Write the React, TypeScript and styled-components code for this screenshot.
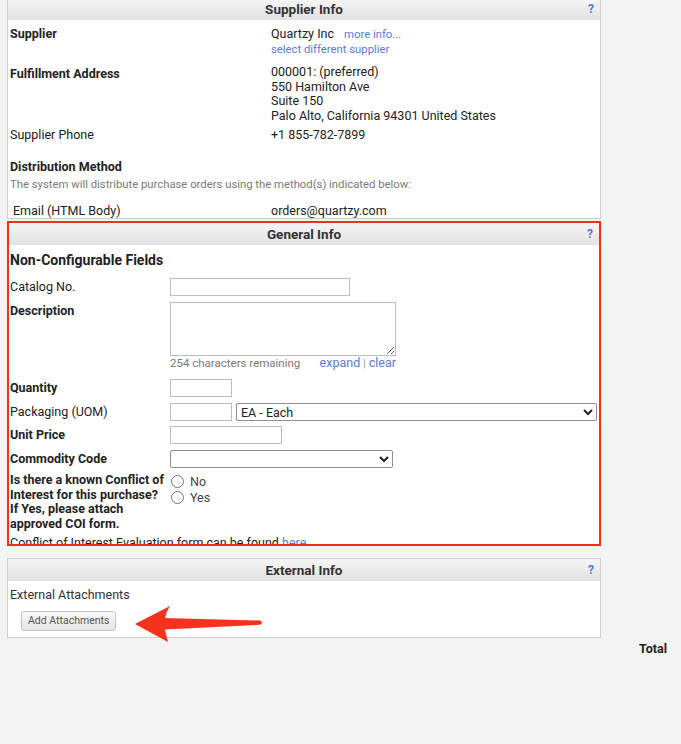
import styled, { createGlobalStyle } from "styled-components";

const GlobalStyle = createGlobalStyle`
  body {
    margin: 0;
    background: #f3f3f3;
    font-family: Roboto, "Liberation Sans", Arial, sans-serif;
    font-size: 12.5px;
    color: #222;
  }
`;

const Panel = ({
  title,
  highlight,
  children,
  mt,
}: {
  title: string;
  highlight?: boolean;
  children: React.ReactNode;
  mt: number;
}) => (
  <StyledPanel $highlight={highlight} $mt={mt}>
    <PanelHeader>
      <span />
      <PanelTitle>{title}</PanelTitle>
      <HelpMark>?</HelpMark>
    </PanelHeader>
    {children}
  </StyledPanel>
);

const App = () => {
  return (
    <Page>
      <GlobalStyle />
      <Column>
        <Panel title="Supplier Info" mt={-3}>
          <SupplierBody>
            <InfoRow $mt={0}>
              <InfoLabel $bold>Supplier</InfoLabel>
              <InfoValue>
                <TightLine>
                  Quartzy Inc <Link $ml={7}>more info...</Link>
                </TightLine>
                <TightLine>
                  <Link>select different supplier</Link>
                </TightLine>
              </InfoValue>
            </InfoRow>
            <InfoRow $mt={9}>
              <InfoLabel $bold $pt={2}>
                Fulfillment Address
              </InfoLabel>
              <InfoValue>
                <div>000001: (preferred)</div>
                <div>550 Hamilton Ave</div>
                <div>Suite 150</div>
                <div>Palo Alto, California 94301 United States</div>
              </InfoValue>
            </InfoRow>
            <InfoRow $mt={5}>
              <InfoLabel>Supplier Phone</InfoLabel>
              <InfoValue>+1 855-782-7899</InfoValue>
            </InfoRow>
            <SectionTitle>Distribution Method</SectionTitle>
            <Hint>
              The system will distribute purchase orders using the method(s)
              indicated below:
            </Hint>
            <InfoRow $mt={11.5}>
              <InfoLabel $indent={3}>Email (HTML Body)</InfoLabel>
              <InfoValue>orders@quartzy.com</InfoValue>
            </InfoRow>
          </SupplierBody>
        </Panel>

        <Panel title="General Info" highlight mt={2}>
          <GeneralBody>
            <FormHeading>Non-Configurable Fields</FormHeading>
            <FormGrid>
              <FieldLabel>Catalog No.</FieldLabel>
              <FieldCell>
                <TextInput $width={180} />
              </FieldCell>

              <FieldLabel $bold>Description</FieldLabel>
              <FieldCell>
                <TextArea />
                <CharCount>
                  <span>254 characters remaining</span>
                  <span>
                    <Link $size={12.5}>expand</Link> <Pipe>|</Pipe>{" "}
                    <Link $size={12.5}>clear</Link>
                  </span>
                </CharCount>
              </FieldCell>

              <FieldLabel $bold>Quantity</FieldLabel>
              <FieldCell>
                <TextInput $width={62} />
              </FieldCell>

              <FieldLabel>Packaging (UOM)</FieldLabel>
              <FieldCell $row>
                <TextInput $width={62} />
                <Select $grow>
                  <option>EA - Each</option>
                </Select>
              </FieldCell>

              <FieldLabel $bold>Unit Price</FieldLabel>
              <FieldCell>
                <TextInput $width={112} />
              </FieldCell>

              <FieldLabel $bold>Commodity Code</FieldLabel>
              <FieldCell>
                <Select $width={223}>
                  <option></option>
                </Select>
              </FieldCell>

              <FieldLabel $bold $lh={14.67}>
                Is there a known Conflict of Interest for this purchase? If
                Yes, please attach approved COI form.
              </FieldLabel>
              <FieldCell>
                <RadioOption>
                  <Radio type="radio" name="coi" />
                  No
                </RadioOption>
                <RadioOption>
                  <Radio type="radio" name="coi" />
                  Yes
                </RadioOption>
              </FieldCell>
            </FormGrid>
            <Note>
              Conflict of Interest Evaluation form can be found{" "}
              <Link $size={12.5}>here</Link>.
            </Note>
          </GeneralBody>
        </Panel>

        <Panel title="External Info" mt={12}>
          <ExternalBody>
            <div>External Attachments</div>
            <AttachButton>Add Attachments</AttachButton>
            <ArrowMark viewBox="0 0 136 42" width="136" height="42">
              <path
                d="M5 21 L40 3 Q36 9 35 15 L130 17.5 Q134 19.6 130 21.8 L35 26.5 Q36 32 38 39 Z"
                fill="#f5331c"
              />
            </ArrowMark>
          </ExternalBody>
        </Panel>
      </Column>
      <TotalBar>Total</TotalBar>
    </Page>
  );
};

export default App;

const Page = styled.div`
  padding: 0 14px 90px 7px;
`;

const Column = styled.div`
  width: 594px;
  display: flex;
  flex-direction: column;
`;

const StyledPanel = styled.section<{ $highlight?: boolean; $mt: number }>`
  margin-top: ${(p) => p.$mt}px;
  background: #fff;
  border: ${(p) => (p.$highlight ? "2px solid #f5301a" : "1px solid #cfcfcf")};
`;

const PanelHeader = styled.div`
  height: 22px;
  display: grid;
  grid-template-columns: 1fr auto 1fr;
  align-items: center;
  padding: 0 6px;
  background: linear-gradient(#f6f6f6, #e2e2e2);
`;

const PanelTitle = styled.div`
  font-weight: 700;
  font-size: 13.5px;
  color: #333;
`;

const HelpMark = styled.div`
  justify-self: end;
  font-weight: 700;
  font-size: 12px;
  color: #5676d2;
`;

const SupplierBody = styled.div`
  padding: 7px 2px 0;
  line-height: 14.5px;
`;

const InfoRow = styled.div<{ $mt: number }>`
  display: grid;
  grid-template-columns: 261px 1fr;
  margin-top: ${(p) => p.$mt}px;
`;

const InfoLabel = styled.div<{ $bold?: boolean; $indent?: number; $pt?: number }>`
  font-weight: ${(p) => (p.$bold ? 700 : 400)};
  padding-left: ${(p) => p.$indent ?? 0}px;
  padding-top: ${(p) => p.$pt ?? 0}px;
`;

const InfoValue = styled.div`
  color: #222;
`;

const TightLine = styled.div`
  line-height: 13.5px;
`;

const Link = styled.span<{ $ml?: number; $size?: number }>`
  color: #5a7bd8;
  font-size: ${(p) => p.$size ?? 11.3}px;
  margin-left: ${(p) => p.$ml ?? 0}px;
  cursor: pointer;
`;

const SectionTitle = styled.div`
  margin-top: 17.5px;
  font-weight: 700;
`;

const Hint = styled.div`
  margin-top: 3px;
  font-size: 11.3px;
  color: #7a7a7a;
`;

const GeneralBody = styled.div`
  height: 299px;
  overflow: hidden;
  padding: 7px 2px 0 1px;
  box-sizing: border-box;
`;

const FormHeading = styled.div`
  font-size: 14px;
  font-weight: 700;
  line-height: 17px;
  margin-bottom: 9px;
`;

const FormGrid = styled.div`
  display: grid;
  grid-template-columns: 160px 1fr;
  row-gap: 5.5px;
`;

const FieldLabel = styled.div<{ $bold?: boolean; $lh?: number }>`
  font-weight: ${(p) => (p.$bold ? 700 : 400)};
  line-height: ${(p) => p.$lh ?? 14}px;
  padding-top: ${(p) => (p.$lh ? 0 : 2)}px;
  padding-right: 3px;
`;

const FieldCell = styled.div<{ $row?: boolean }>`
  display: flex;
  flex-direction: ${(p) => (p.$row ? "row" : "column")};
  align-items: flex-start;
  gap: ${(p) => (p.$row ? 4 : 0)}px;
`;

const TextInput = styled.input<{ $width: number }>`
  width: ${(p) => p.$width}px;
  height: 18px;
  box-sizing: border-box;
  border: 1px solid #bdbdbd;
  border-radius: 0;
  margin: 0;
  padding: 1px 3px;
  font: inherit;
`;

const TextArea = styled.textarea`
  width: 226px;
  height: 54px;
  box-sizing: border-box;
  border: 1px solid #bdbdbd;
  margin: 0;
  padding: 2px;
  font: inherit;
  resize: both;
`;

const CharCount = styled.div`
  width: 226px;
  display: flex;
  justify-content: space-between;
  line-height: 14px;
  margin-bottom: 4px;
  color: #7a7a7a;
  font-size: 11.5px;
`;

const Pipe = styled.span`
  color: #999;
`;

const Select = styled.select<{ $width?: number; $grow?: boolean }>`
  ${(p) => (p.$grow ? "flex: 1;" : `width: ${p.$width}px;`)}
  height: 18px;
  box-sizing: border-box;
  border: 1px solid #8f8f8f;
  border-radius: 2px;
  margin: 0;
  padding: 0;
  background: #fff;
  color: #222;
  font: inherit;
`;

const RadioOption = styled.label`
  display: flex;
  align-items: center;
  height: 16px;
  color: #444;
  font-size: 12.5px;
`;

const Radio = styled.input`
  width: 13px;
  height: 13px;
  margin: 0 6px 0 1px;
`;

const Note = styled.div`
  margin-top: 4px;
  line-height: 14px;
`;

const ExternalBody = styled.div`
  position: relative;
  padding: 6.5px 2px 6px;
  line-height: 14px;
  color: #333;
`;

const AttachButton = styled.button`
  display: block;
  margin: 9px 0 0 11px;
  height: 20px;
  padding: 0 6px;
  border: 1px solid #c4c4c4;
  border-radius: 3px;
  background: linear-gradient(#f8f8f8, #e6e6e6);
  color: #555;
  font-family: inherit;
  font-size: 10.5px;
  cursor: pointer;
`;

const ArrowMark = styled.svg`
  position: absolute;
  left: 122px;
  top: 22px;
`;

const TotalBar = styled.div`
  margin-top: 4px;
  display: flex;
  justify-content: flex-end;
  font-weight: 700;
  line-height: 14px;
`;
